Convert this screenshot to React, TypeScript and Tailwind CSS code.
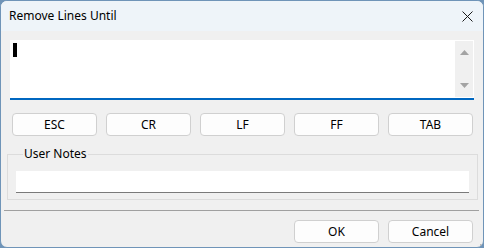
import React from "react";

const font = { fontFamily: '"Segoe UI", "Noto Sans", "Open Sans", sans-serif' };

function Btn({ label, className = "" }: { label: string; className?: string }) {
  return (
    <div
      className={
        "h-[23px] w-[85px] rounded-[4px] border border-[#d0d0d0] bg-[#fdfdfd] flex items-center justify-center text-[12px] text-black " +
        className
      }
    >
      {label}
    </div>
  );
}

export default function App() {
  return (
    <div className="w-[484px] h-[248px] bg-[#6f94b8]" style={font}>
      <div className="w-full h-full rounded-[7px] border border-[#6f94b8] overflow-hidden flex flex-col bg-[#f0f0f0]">
        <div className="h-[30px] shrink-0 bg-[#eef4f9] flex items-center justify-between pl-[8px] pr-[10px]">
          <span className="text-[12px] text-black leading-none">Remove Lines Until</span>
          <svg width="11" height="11" viewBox="0 0 11 11" className="mr-[0px]">
            <path d="M0.5 0.5 L10.5 10.5 M10.5 0.5 L0.5 10.5" stroke="#1a1a1a" strokeWidth="1" />
          </svg>
        </div>
        <div className="flex-1 flex flex-col">
          <div className="ml-[9px] mt-[9px] w-[464px] h-[60px] bg-white border-b-2 border-[#0067c0] flex">
            <div className="flex-1 pl-[3px] pt-[3px]">
              <div className="w-[4px] h-[14px] bg-black" />
            </div>
            <div className="w-[18px] mt-[1px] mr-[1px] mb-[1px] bg-[#f0f0f0] flex flex-col justify-between items-center py-[9px]">
              <svg width="9" height="5" viewBox="0 0 9 5">
                <path d="M4.5 0 L9 5 L0 5 Z" fill="#a3a3a3" />
              </svg>
              <svg width="9" height="5" viewBox="0 0 9 5">
                <path d="M0 0 L9 0 L4.5 5 Z" fill="#a3a3a3" />
              </svg>
            </div>
          </div>
          <div className="ml-[11px] mt-[13px] flex gap-[9px]">
            <Btn label="ESC" />
            <Btn label="CR" />
            <Btn label="LF" />
            <Btn label="FF" />
            <Btn label="TAB" />
          </div>
          <fieldset className="ml-[6px] mt-[10px] w-[471px] border border-[#dcdcdc] px-[8px] pt-[9px] pb-[6px]">
            <legend className="ml-[7px] px-[1px] text-[12px] leading-[16px] text-black">User Notes</legend>
            <div className="h-[22px] w-full bg-white border-b border-[#7a7a7a]" />
          </fieldset>
          <div className="mt-[10px] ml-[3px] w-[475px] h-px bg-[#a0a0a0]" />
          <div className="mt-[9px] ml-[293px] flex gap-[9px]">
            <Btn label="OK" />
            <Btn label="Cancel" />
          </div>
          <div className="flex-1 flex justify-end items-end pr-[1px] pb-[1px]">
            <svg width="9" height="9" viewBox="0 0 9 9">
              <rect x="7" y="1" width="2" height="2" fill="#b8b8b8" />
              <rect x="4" y="4" width="2" height="2" fill="#b8b8b8" />
              <rect x="7" y="4" width="2" height="2" fill="#b8b8b8" />
              <rect x="1" y="7" width="2" height="2" fill="#b8b8b8" />
              <rect x="4" y="7" width="2" height="2" fill="#b8b8b8" />
              <rect x="7" y="7" width="2" height="2" fill="#b8b8b8" />
            </svg>
          </div>
        </div>
      </div>
    </div>
  );
}
